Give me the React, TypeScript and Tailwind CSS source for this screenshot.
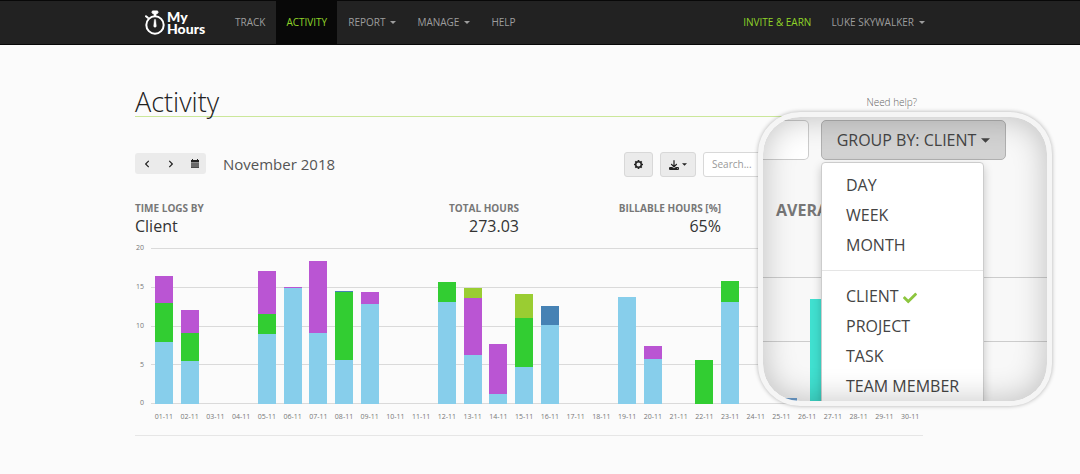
import { FaCheck, FaChevronLeft, FaChevronRight } from "react-icons/fa";
import { FaDownload } from "react-icons/fa6";

const bars: Record<string, [string, number][]> = {
  "01": [["client-a", 8], ["client-b", 4.9], ["client-c", 3.5]],
  "02": [["client-a", 5.5], ["client-b", 3.6], ["client-c", 3]],
  "05": [["client-a", 9], ["client-b", 2.6], ["client-c", 5.4]],
  "06": [["client-a", 14.85], ["client-c", 0.2]],
  "07": [["client-a", 9.1], ["client-c", 9.2]],
  "08": [["client-a", 5.7], ["client-b", 8.6], ["client-e", 0.25]],
  "09": [["client-a", 12.85], ["client-c", 1.5]],
  "12": [["client-a", 13.1], ["client-b", 2.5]],
  "13": [["client-a", 6.3], ["client-c", 7.3], ["client-d", 1.3]],
  "14": [["client-a", 1.3], ["client-c", 6.35]],
  "15": [["client-a", 4.7], ["client-b", 6.3], ["client-d", 3.15]],
  "16": [["client-a", 10.1], ["client-e", 2.5]],
  "19": [["client-a", 13.7]],
  "20": [["client-a", 5.8], ["client-c", 1.6]],
  "22": [["client-b", 5.7]],
  "23": [["client-a", 13.1], ["client-b", 2.7]],
};

const colors: Record<string, string> = {
  "client-a": "bg-[#87ceeb]",
  "client-b": "bg-[#32cd32]",
  "client-c": "bg-[#ba55d3]",
  "client-d": "bg-[#9acd32]",
  "client-e": "bg-[#4682b4]",
};

const days = Array.from({ length: 30 }, (_, i) => String(i + 1).padStart(2, "0"));

function Caret({ className = "" }: { className?: string }) {
  return (
    <svg viewBox="0 0 8 4" className={className} fill="currentColor" aria-hidden="true">
      <path d="M0 0h8L4 4z" />
    </svg>
  );
}

function Logo() {
  return (
    <a href="#" className="flex w-[89px] items-center gap-0.5 pl-2.5 text-white">
      <svg viewBox="0 0 20 25" className="h-[25px] w-5 shrink-0" fill="none" stroke="currentColor" aria-hidden="true">
        <circle cx="10" cy="15" r="8.7" strokeWidth="2" />
        <path d="M7.4 1h5.2l.4 1.6-1 1.2H8l-1-1.2z" fill="currentColor" strokeWidth="1" strokeLinejoin="round" />
        <path d="M10 3v4" strokeWidth="2.4" />
        <path d="M1 6.2l1.8 1.6" strokeWidth="2" strokeLinecap="round" />
        <path d="M9.4 9.4h1.2l.7 6.6a1.3 1.3 0 0 1-2.6 0z" fill="currentColor" strokeWidth=".4" />
      </svg>
      <span className="font-[Lato] text-[14px] leading-3 font-black">
        My
        <br />
        Hours
      </span>
    </a>
  );
}

function Navbar() {
  const link = "flex items-center gap-[5px] px-2.5 whitespace-nowrap";
  return (
    <header className="h-[45px] border-t border-b border-[#080808] bg-[#222] text-[10px] text-[#9d9d9d]">
      <div className="pr-[22px]">
        <nav className="mx-auto flex h-[43px] max-w-[788px] gap-px">
          <Logo />
          <a href="#" className={link}>TRACK</a>
          <a href="#" className={link + " bg-[#080808] text-[#8fd428]"}>ACTIVITY</a>
          <a href="#" className={link}>REPORT <Caret className="h-[3px] w-1.5" /></a>
          <a href="#" className={link}>MANAGE <Caret className="h-[3px] w-1.5" /></a>
          <a href="#" className={link}>HELP</a>
          <div className="-mr-3 ml-auto flex">
            <a href="#" className={link + " text-[#8fd428]"}>INVITE &amp; EARN</a>
            <a href="#" className={link}>LUKE SKYWALKER <Caret className="h-[3px] w-1.5" /></a>
          </div>
        </nav>
      </div>
    </header>
  );
}

function Toolbar() {
  const button = "flex items-center justify-center rounded-[3px] border border-[#d8d8d8] bg-[#ebebeb] text-[#222]";
  return (
    <div className="mt-[35px] flex h-[25px] items-start">
      <div className="flex h-[23px] items-center">
        <div className="flex h-[21px] items-center rounded-[3px] bg-[#ebebeb] text-[#222]">
          <button aria-label="Previous month" className="flex h-full w-6 items-center justify-center"><FaChevronLeft size={8} /></button>
          <button aria-label="Next month" className="flex h-full w-6 items-center justify-center"><FaChevronRight size={8} /></button>
          <button aria-label="Pick a date" className="flex h-full w-[23px] items-center justify-center">
            <svg viewBox="0 0 8 9" className="h-[9px] w-2" fill="currentColor">
              <path d="M0 1h1V0h1v1h4V0h1v1h1v2H0z" />
              <path d="M0 3.4h8V9H0z" fillOpacity=".8" />
              <path d="M0 5h8M0 7h8" stroke="#ebebeb" strokeWidth=".4" />
            </svg>
          </button>
        </div>
        <h2 className="ml-[17px] text-[15px] leading-5 text-[#555]">November 2018</h2>
      </div>
      <div className="ml-auto flex h-full gap-[7px]">
        <button aria-label="Settings" className={button + " w-[29px]"}>
          <svg viewBox="0 0 18 18" className="size-[9px]" fill="none" stroke="currentColor">
            <circle cx="9" cy="9" r="5.6" strokeWidth="3" />
            <path d="M9 0v3M9 15v3M0 9h3M15 9h3M2.6 2.6l2.2 2.2M13.2 13.2l2.2 2.2M2.6 15.4l2.2-2.2M13.2 4.8l2.2-2.2" strokeWidth="3.4" />
          </svg>
        </button>
        <button aria-label="Export" className={button + " w-9 gap-[3px]"}>
          <FaDownload size={10} />
          <Caret className="h-[3px] w-[5px]" />
        </button>
        <input aria-label="Search" placeholder="Search..." className="w-[220px] rounded-[3px] border border-[#d8d8d8] bg-white px-2 text-[10px] placeholder:text-[#999]" />
      </div>
    </div>
  );
}

function Stats() {
  const label = "text-[10px] leading-4 font-bold text-[#777]";
  const value = "text-[16px] leading-5 text-[#333]";
  return (
    <dl className="mt-[23px] flex pr-[202px]">
      <div className="flex-1">
        <dt className={label}>TIME LOGS BY</dt>
        <dd className={value}>Client</dd>
      </div>
      <div className="w-[202px] text-right">
        <dt className={label}>TOTAL HOURS</dt>
        <dd className={value}>273.03</dd>
      </div>
      <div className="w-[202px] text-right">
        <dt className={label}>BILLABLE HOURS [%]</dt>
        <dd className={value}>65%</dd>
      </div>
    </dl>
  );
}

function Chart() {
  return (
    <div className="mt-3 flex border-b border-[#e6e6e6] pb-3 text-[7px] text-[#777]">
      <div className="flex h-[156px] w-4 flex-col justify-between pr-[7px] text-right">
        {[20, 15, 10, 5, 0].map((n) => (
          <span key={n} className="flex h-px items-center justify-end">{n}</span>
        ))}
      </div>
      <div className="flex-1">
        <div className="relative h-[156px]">
          <div className="absolute inset-0 flex flex-col justify-between">
            {[20, 15, 10, 5, 0].map((n) => (
              <div key={n} className="h-px bg-[#dadada]" />
            ))}
          </div>
          <div className="relative flex h-full">
            {days.map((day) => (
              <div key={day} className="flex flex-1 flex-col-reverse items-center">
                {(bars[day] ?? []).map(([client, hours]) => (
                  <div key={client} className={"w-[18px] " + colors[client]} style={{ height: `${hours * 5}%` }} />
                ))}
              </div>
            ))}
          </div>
        </div>
        <div className="mt-[7px] flex leading-3">
          {days.map((day) => (
            <span key={day} className="flex-1 text-center whitespace-nowrap">{day}-11</span>
          ))}
        </div>
      </div>
    </div>
  );
}

// enlarged view of the "group by" drop-down, floats over the chart
function Magnifier() {
  const item = "block h-[30px] w-full px-6 text-left whitespace-nowrap";
  return (
    <div className="absolute top-[67px] left-[623px] size-[294px] overflow-hidden rounded-[42px] border-[5px] border-[#f5f5f5] bg-[#f8f8f8] shadow-[0_0_4px_rgba(0,0,0,0.3)]">
      <div className="absolute inset-x-0 top-[160px] h-[65px] border-y border-[#ccc]" />
      <div className="absolute inset-0 flex items-end pl-5">
        <div className="h-[3px] w-[14px] bg-[#6fa0d0]" />
        <div className="ml-[13px] h-[102px] w-3 bg-[#40e0d0]" />
      </div>
      <div className="relative flex pt-[3px] text-[16px] text-[#444]">
        <div className="w-[58px]">
          <div className="h-10 w-[46px] rounded-r-[5px] border border-l-0 border-[#ccc] bg-white" />
          <p className="mt-[38px] pl-[13px] font-bold text-[#777]">AVERA</p>
        </div>
        <div className="relative">
          <button aria-expanded="true" className="flex h-10 w-[185px] items-center justify-center gap-[5px] rounded-[5px] border border-[#b0b0b0] bg-[#d2d2d2]">
            GROUP BY: CLIENT <Caret className="h-[5px] w-[9px]" />
          </button>
          <ul className="mt-0.5 h-[242px] w-[163px] rounded-t-[4px] border border-[#ccc] bg-white pt-[7px] shadow-[0_4px_10px_rgba(0,0,0,0.2)]">
            <li><button className={item}>DAY</button></li>
            <li><button className={item}>WEEK</button></li>
            <li><button className={item}>MONTH</button></li>
            <li className="my-2.5 h-px bg-[#e5e5e5]" />
            <li><button className={item}>CLIENT <FaCheck className="inline size-[14px] text-[#8dc63f]" /></button></li>
            <li><button className={item}>PROJECT</button></li>
            <li><button className={item}>TASK</button></li>
            <li><button className={item}>TEAM MEMBER</button></li>
          </ul>
        </div>
      </div>
      <div className="pointer-events-none absolute inset-0 rounded-[37px] shadow-[inset_0_0_32px_rgba(0,0,0,0.24)]" />
    </div>
  );
}

export default function App() {
  return (
    <div className="min-h-screen bg-[#fbfbfb] font-['Open_Sans',sans-serif]">
      <Navbar />
      <div className="pr-[22px]">
        <main className="relative mx-auto max-w-[788px] pt-[43px]">
          <div className="flex items-center justify-between border-b border-[#cbe79a]">
            <h1 className="text-[27px] leading-7 font-light text-[#222]">Activity</h1>
            <a href="#" className="pr-1.5 text-[10px] font-light text-[#666]">Need help?</a>
          </div>
          <Toolbar />
          <Stats />
          <Chart />
          <Magnifier />
        </main>
      </div>
    </div>
  );
}
